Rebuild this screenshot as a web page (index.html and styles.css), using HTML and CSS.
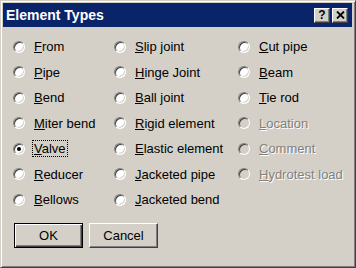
FILE: index.html
```html
<!DOCTYPE html>
<html lang="en">
<head>
    <meta charset="UTF-8">
    <title>Element Types</title>
    <link rel="stylesheet" href="styles.css">
</head>
<body>
    <div class="dialog">
        <div class="titlebar">
            <span class="title">Element Types</span>
            <div class="caption-buttons">
                <span class="cap-btn help">?</span>
                <span class="cap-btn close">
                    <svg width="9" height="8" viewBox="0 0 9 8">
                        <path d="M1 0.5 L8 7.5 M8 0.5 L1 7.5" stroke="#000" stroke-width="1.8" fill="none"/>
                    </svg>
                </span>
            </div>
        </div>
        <div class="content">
            <div class="options">
                <label class="option"><span class="radio"></span><span class="text"><u>F</u>rom</span></label>
                <label class="option"><span class="radio"></span><span class="text"><u>S</u>lip joint</span></label>
                <label class="option"><span class="radio"></span><span class="text"><u>C</u>ut pipe</span></label>

                <label class="option"><span class="radio"></span><span class="text"><u>P</u>ipe</span></label>
                <label class="option"><span class="radio"></span><span class="text"><u>H</u>inge Joint</span></label>
                <label class="option"><span class="radio"></span><span class="text"><u>B</u>eam</span></label>

                <label class="option"><span class="radio"></span><span class="text"><u>B</u>end</span></label>
                <label class="option"><span class="radio"></span><span class="text"><u>B</u>all joint</span></label>
                <label class="option"><span class="radio"></span><span class="text"><u>T</u>ie rod</span></label>

                <label class="option"><span class="radio"></span><span class="text"><u>M</u>iter bend</span></label>
                <label class="option"><span class="radio"></span><span class="text"><u>R</u>igid element</span></label>
                <label class="option disabled"><span class="radio"></span><span class="text"><u>L</u>ocation</span></label>

                <label class="option"><span class="radio checked"></span><span class="text focused"><u>V</u>alve</span></label>
                <label class="option"><span class="radio"></span><span class="text"><u>E</u>lastic element</span></label>
                <label class="option disabled"><span class="radio"></span><span class="text"><u>C</u>omment</span></label>

                <label class="option"><span class="radio"></span><span class="text"><u>R</u>educer</span></label>
                <label class="option"><span class="radio"></span><span class="text"><u>J</u>acketed pipe</span></label>
                <label class="option disabled"><span class="radio"></span><span class="text"><u>H</u>ydrotest load</span></label>

                <label class="option"><span class="radio"></span><span class="text"><u>B</u>ellows</span></label>
                <label class="option"><span class="radio"></span><span class="text"><u>J</u>acketed bend</span></label>
            </div>
            <div class="buttons">
                <button class="btn default">OK</button>
                <button class="btn">Cancel</button>
            </div>
        </div>
    </div>
</body>
</html>
```

FILE: styles.css
```css
* {
    box-sizing: border-box;
    margin: 0;
    padding: 0;
}

body {
    font-family: 'Liberation Sans', Arial, sans-serif;
    font-size: 13px;
    background-color: #d4d0c8;
    color: #000;
}

.dialog {
    width: 356px;
    height: 268px;
    background-color: #d4d0c8;
    border: 1px solid;
    border-color: #d4d0c8 #404040 #404040 #d4d0c8;
    box-shadow: inset 1px 1px 0 #fff, inset -1px -1px 0 #808080;
    padding: 2px 3px 3px 2px;
    display: flex;
    flex-direction: column;
}

.titlebar {
    height: 24px;
    background-color: #0a246a;
    display: flex;
    align-items: center;
    justify-content: space-between;
    padding: 0 4px 0 3px;
}

.title {
    color: #fff;
    font-weight: bold;
    font-size: 14px;
}

.caption-buttons {
    display: flex;
    gap: 2px;
}

.cap-btn {
    width: 16px;
    height: 15px;
    background-color: #d4d0c8;
    border: 1px solid;
    border-color: #fff #404040 #404040 #fff;
    box-shadow: inset -1px -1px 0 #808080;
    display: flex;
    align-items: center;
    justify-content: center;
    font-weight: bold;
    font-size: 12px;
    line-height: 1;
}

.content {
    padding: 7px 0 0 10px;
}

.options {
    display: grid;
    grid-template-columns: 101px 124px auto;
    grid-auto-rows: 25.5px;
}

.option {
    display: flex;
    align-items: center;
    gap: 9px;
}

.radio {
    width: 12px;
    height: 12px;
    border-radius: 50%;
    border: 1px solid;
    border-color: #808080 #fff #fff #808080;
    background-color: #fff;
    box-shadow: inset 1px 1px 0 #404040, inset -1px -1px 0 #d4d0c8;
    display: flex;
    align-items: center;
    justify-content: center;
    flex-shrink: 0;
}

.radio.checked::after {
    content: '';
    width: 4px;
    height: 4px;
    border-radius: 50%;
    background-color: #000;
}

.text {
    line-height: 15px;
}

.text.focused {
    outline: 1px dotted #000;
    padding: 0 1px;
    margin-left: -1px;
}

.disabled .radio {
    background-color: #d4d0c8;
}

.disabled .text {
    color: #808080;
    text-shadow: 1px 1px 0 #fff;
}

.buttons {
    display: flex;
    gap: 6px;
    margin-top: 10px;
    padding-left: 1px;
}

.btn {
    width: 69px;
    height: 25px;
    font-family: inherit;
    font-size: 13px;
    color: #000;
    background-color: #d4d0c8;
    border: 1px solid;
    border-color: #fff #404040 #404040 #fff;
    box-shadow: inset -1px -1px 0 #808080;
}

.btn.default {
    border: 1px solid #000;
    box-shadow: inset 1px 1px 0 #fff, inset -1px -1px 0 #404040, inset -2px -2px 0 #808080;
}
```
